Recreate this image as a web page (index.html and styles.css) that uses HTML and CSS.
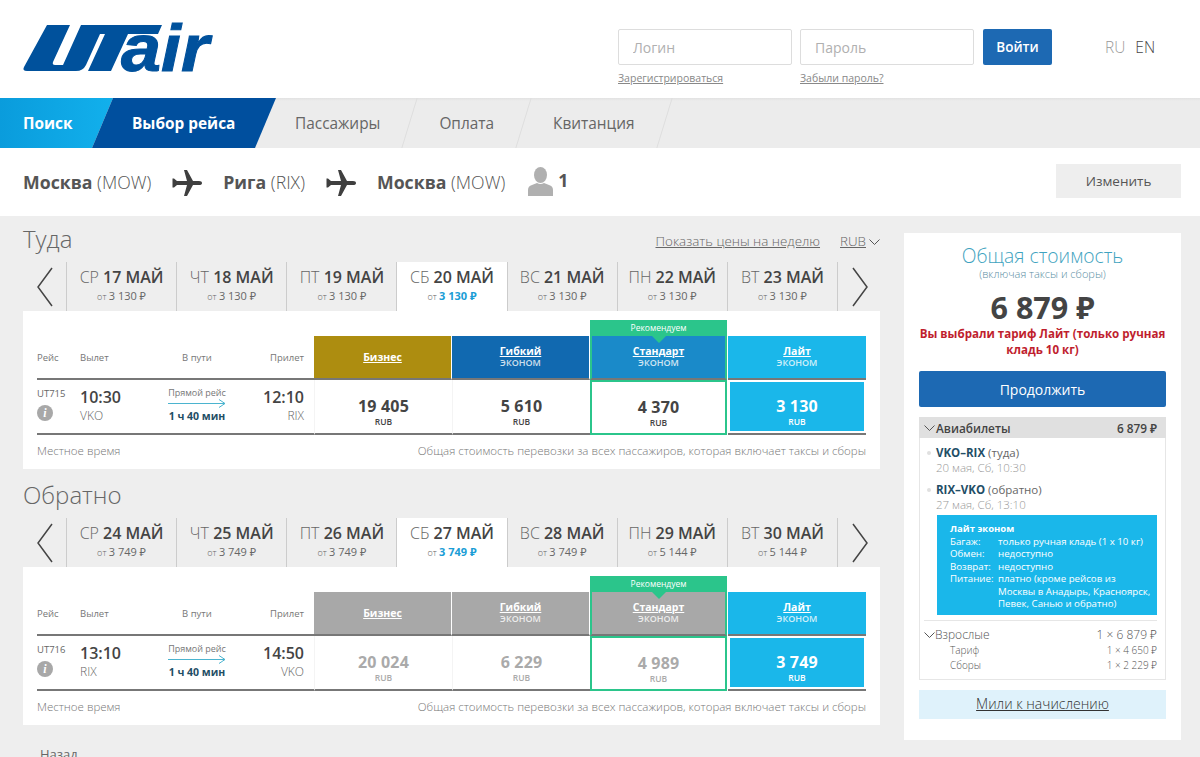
FILE: index.html
```html
<!doctype html>
<html>
  <head>
    <title>UTair - Выбор рейса</title>
    <link rel="stylesheet" href="styles.css">
  </head>
  <body>
    <header class="top">
      <svg class="logo" viewBox="23 23 192 49" width="192" height="49" role="img" aria-label="UTair">
        <path d="M47 25H70L53 62Q52 65 55 65H63L81 25H162L158 34H128L111 71H88L105 34H100L86 65Q83 71 76 71H27Q22 71 24 67Z"/>
        <text x="121" y="71" textLength="88" lengthAdjust="spacingAndGlyphs">air</text>
      </svg>
      <form class="login">
        <div class="field">
          <input type="text" placeholder="Логин">
          <a href="#">Зарегистрироваться</a>
        </div>
        <div class="field">
          <input type="text" placeholder="Пароль">
          <a href="#">Забыли пароль?</a>
        </div>
        <button type="button" class="btn-login">Войти</button>
      </form>
      <div class="langs"><span class="lang-off">RU</span><span>EN</span></div>
    </header>

    <nav class="steps">
      <a class="step step-done">Поиск</a>
      <a class="step step-current">Выбор рейса</a>
      <a class="step">Пассажиры</a>
      <a class="step">Оплата</a>
      <a class="step">Квитанция</a>
    </nav>

    <div class="route">
      <span class="city"><b>Москва</b> (MOW)</span>
      <svg class="plane" viewBox="0 0 30 26" width="30" height="26"><path d="M12 0h3l6 11h6q3 0 3 2t-3 2h-6l-6 11h-3l3-11H5l-3 2.500H0.500v-9H2L5 11h10z"/></svg>
      <span class="city"><b>Рига</b> (RIX)</span>
      <svg class="plane" viewBox="0 0 30 26" width="30" height="26"><path d="M12 0h3l6 11h6q3 0 3 2t-3 2h-6l-6 11h-3l3-11H5l-3 2.500H0.500v-9H2L5 11h10z"/></svg>
      <span class="city"><b>Москва</b> (MOW)</span>
      <svg class="person" viewBox="0 0 25 29" width="25" height="29"><ellipse cx="12.500" cy="8" rx="6.500" ry="8"/><path d="M0 29v-6q0-4 4-5l5-2q3.500 2 7 0l5 2q4 1 4 5v6z"/></svg>
      <b class="count">1</b>
      <button type="button" class="btn-change">Изменить</button>
    </div>

    <main class="content">
      <div class="flights">
        <section class="direction">
          <div class="direction-head">
            <h2>Туда</h2>
            <a class="week-link" href="#">Показать цены на неделю</a>
            <a class="currency" href="#">RUB</a>
            <svg class="chev" viewBox="0 0 11 6" width="11" height="6"><path d="M0.500 0.500l5 5 5-5"/></svg>
          </div>
          <div class="dates">
            <a class="date-arrow"><svg viewBox="0 0 16 40" width="16" height="40"><path d="M15 1L1 20l14 19"/></svg></a>
            <a class="date"><p><span>СР</span> <b>17 МАЙ</b></p><small>от <i>3 130 ₽</i></small></a>
            <a class="date"><p><span>ЧТ</span> <b>18 МАЙ</b></p><small>от <i>3 130 ₽</i></small></a>
            <a class="date"><p><span>ПТ</span> <b>19 МАЙ</b></p><small>от <i>3 130 ₽</i></small></a>
            <a class="date date-active"><p><span>СБ</span> <b>20 МАЙ</b></p><small>от <i>3 130 ₽</i></small></a>
            <a class="date"><p><span>ВС</span> <b>21 МАЙ</b></p><small>от <i>3 130 ₽</i></small></a>
            <a class="date"><p><span>ПН</span> <b>22 МАЙ</b></p><small>от <i>3 130 ₽</i></small></a>
            <a class="date"><p><span>ВТ</span> <b>23 МАЙ</b></p><small>от <i>3 130 ₽</i></small></a>
            <a class="date-arrow date-next"><svg viewBox="0 0 16 40" width="16" height="40"><path d="M1 1l14 19L1 39"/></svg></a>
          </div>
          <div class="panel">
            <div class="fares">
              <div class="labels">
                <span>Рейс</span><span>Вылет</span><span class="center">В пути</span><span class="right">Прилет</span>
              </div>
              <a class="fare-head fare-business"><u>Бизнес</u></a>
              <a class="fare-head fare-flex"><u>Гибкий</u><em>эконом</em></a>
              <a class="fare-head fare-standard fare-rec"><span class="rec-tag">Рекомендуем</span><u>Стандарт</u><em>эконом</em></a>
              <a class="fare-head fare-lite"><u>Лайт</u><em>эконом</em></a>

              <div class="flight">
                <div class="flight-no">UT715<span class="info">i</span></div>
                <div class="time"><b>10:30</b><span>VKO</span></div>
                <div class="way">
                  <span>Прямой рейс</span>
                  <svg viewBox="0 0 58 9" width="58" height="9"><path d="M0 4.500h57M51 0.500l6 4-6 4"/></svg>
                  <b>1 ч 40 мин</b>
                </div>
                <div class="time right"><b>12:10</b><span>RIX</span></div>
              </div>
              <a class="price"><b>19 405</b><span>RUB</span></a>
              <a class="price"><b>5 610</b><span>RUB</span></a>
              <a class="price price-rec"><b>4 370</b><span>RUB</span></a>
              <div class="price-slot"><a class="price price-selected"><b>3 130</b><span>RUB</span></a></div>
            </div>
            <div class="panel-foot">
              <span>Местное время</span>
              <span>Общая стоимость перевозки за всех пассажиров, которая включает таксы и сборы</span>
            </div>
          </div>
        </section>

        <section class="direction">
          <div class="direction-head">
            <h2>Обратно</h2>
          </div>
          <div class="dates">
            <a class="date-arrow"><svg viewBox="0 0 16 40" width="16" height="40"><path d="M15 1L1 20l14 19"/></svg></a>
            <a class="date"><p><span>СР</span> <b>24 МАЙ</b></p><small>от <i>3 749 ₽</i></small></a>
            <a class="date"><p><span>ЧТ</span> <b>25 МАЙ</b></p><small>от <i>3 749 ₽</i></small></a>
            <a class="date"><p><span>ПТ</span> <b>26 МАЙ</b></p><small>от <i>3 749 ₽</i></small></a>
            <a class="date date-active"><p><span>СБ</span> <b>27 МАЙ</b></p><small>от <i>3 749 ₽</i></small></a>
            <a class="date"><p><span>ВС</span> <b>28 МАЙ</b></p><small>от <i>3 749 ₽</i></small></a>
            <a class="date"><p><span>ПН</span> <b>29 МАЙ</b></p><small>от <i>5 144 ₽</i></small></a>
            <a class="date"><p><span>ВТ</span> <b>30 МАЙ</b></p><small>от <i>5 144 ₽</i></small></a>
            <a class="date-arrow date-next"><svg viewBox="0 0 16 40" width="16" height="40"><path d="M1 1l14 19L1 39"/></svg></a>
          </div>
          <div class="panel">
            <div class="fares fares-muted">
              <div class="labels">
                <span>Рейс</span><span>Вылет</span><span class="center">В пути</span><span class="right">Прилет</span>
              </div>
              <a class="fare-head fare-business"><u>Бизнес</u></a>
              <a class="fare-head fare-flex"><u>Гибкий</u><em>эконом</em></a>
              <a class="fare-head fare-standard fare-rec"><span class="rec-tag">Рекомендуем</span><u>Стандарт</u><em>эконом</em></a>
              <a class="fare-head fare-lite"><u>Лайт</u><em>эконом</em></a>

              <div class="flight">
                <div class="flight-no">UT716<span class="info">i</span></div>
                <div class="time"><b>13:10</b><span>RIX</span></div>
                <div class="way">
                  <span>Прямой рейс</span>
                  <svg viewBox="0 0 58 9" width="58" height="9"><path d="M0 4.500h57M51 0.500l6 4-6 4"/></svg>
                  <b>1 ч 40 мин</b>
                </div>
                <div class="time right"><b>14:50</b><span>VKO</span></div>
              </div>
              <a class="price"><b>20 024</b><span>RUB</span></a>
              <a class="price"><b>6 229</b><span>RUB</span></a>
              <a class="price price-rec"><b>4 989</b><span>RUB</span></a>
              <div class="price-slot"><a class="price price-selected"><b>3 749</b><span>RUB</span></a></div>
            </div>
            <div class="panel-foot">
              <span>Местное время</span>
              <span>Общая стоимость перевозки за всех пассажиров, которая включает таксы и сборы</span>
            </div>
          </div>
        </section>

        <a class="back" href="#">Назад</a>
      </div>

      <aside class="summary">
        <h3>Общая стоимость</h3>
        <p class="summary-sub">(включая таксы и сборы)</p>
        <p class="total">6 879 ₽</p>
        <p class="warning">Вы выбрали тариф Лайт (только ручная кладь 10 кг)</p>
        <button type="button" class="btn-continue">Продолжить</button>

        <div class="tickets">
          <div class="tickets-head">
            <svg class="chev" viewBox="0 0 11 6" width="11" height="6"><path d="M0.500 0.500l5 5 5-5"/></svg>
            <b>Авиабилеты</b>
            <b class="push">6 879 ₽</b>
          </div>
          <div class="tickets-body">
            <div class="leg">
              <p><b>VKO–RIX</b> (туда)</p>
              <span>20 мая, Сб, 10:30</span>
            </div>
            <div class="leg">
              <p><b>RIX–VKO</b> (обратно)</p>
              <span>27 мая, Сб, 13:10</span>
            </div>
            <dl class="tariff">
              <h4>Лайт эконом</h4>
              <dt>Багаж:</dt><dd>только ручная кладь (1 x 10 кг)</dd>
              <dt>Обмен:</dt><dd>недоступно</dd>
              <dt>Возврат:</dt><dd>недоступно</dd>
              <dt>Питание:</dt><dd>платно (кроме рейсов из<br>Москвы в Анадырь, Красноярск,<br>Певек, Санью и обратно)</dd>
            </dl>
            <div class="pax">
              <svg class="chev" viewBox="0 0 11 6" width="11" height="6"><path d="M0.500 0.500l5 5 5-5"/></svg>
              <span>Взрослые</span>
              <span class="push">1 × 6 879 ₽</span>
            </div>
            <div class="pax-sub"><span>Тариф</span><span>1 × 4 650 ₽</span></div>
            <div class="pax-sub"><span>Сборы</span><span>1 × 2 229 ₽</span></div>
          </div>
        </div>

        <a class="miles" href="#">Мили к начислению</a>
      </aside>
    </main>
  </body>
</html>
```

FILE: styles.css
```css
* {
  box-sizing: border-box;
}

html,
body {
  height: 757px;
  margin: 0;
  overflow: hidden;
}

body {
  font-family: "Open Sans", "Noto Sans", sans-serif;
  color: #444;
  background: #eee;
}

h2,
h3,
h4,
p,
dl,
dd {
  margin: 0;
  font-weight: normal;
}

a {
  color: inherit;
}

i,
em {
  font-style: normal;
}

/* header */

.top {
  display: flex;
  height: 98px;
  padding: 23px 44px 0 23px;
  background: #fff;
}

.logo {
  overflow: visible;
  fill: #00519c;
}

.logo text {
  font-family: "Liberation Sans", sans-serif;
  font-size: 66px;
  font-style: italic;
  font-weight: bold;
  stroke: #00519c;
  stroke-width: 1px;
}

.login {
  display: flex;
  gap: 8px;
  margin: 6px 0 0 auto;
}

.field {
  display: flex;
  flex-direction: column;
  width: 174px;
}

.field input {
  height: 36px;
  padding: 0 14px;
  font: 14px "Open Sans", sans-serif;
  border: 1px solid #ddd;
  border-radius: 2px;
}

.field input::placeholder {
  color: #b0b0b0;
}

.field a {
  margin-top: 6px;
  font-size: 10.500px;
  color: #888;
}

.btn-login {
  width: 69px;
  height: 36px;
  margin-left: 1px;
  font: 600 13.500px "Open Sans", sans-serif;
  color: #fff;
  background: #1d69b3;
  border: 0;
  border-radius: 2px;
}

.langs {
  display: flex;
  gap: 10px;
  width: 53px;
  margin: 13px -2px 0 53px;
  font-size: 15.500px;
  font-weight: 300;
  color: #444;
}

.lang-off {
  color: #999;
}

/* steps */

.steps {
  display: flex;
  height: 50px;
  overflow: hidden;
  background: linear-gradient(#e2e2e2 0, #ececec 3px);
}

.step {
  position: relative;
  padding: 0 30px 0 29px;
  font-size: 15.400px;
  line-height: 51px;
  color: #666;
}

.step::after {
  content: "";
  position: absolute;
  top: 0;
  right: 0;
  bottom: 0;
  border-right: 1px solid #dedede;
  transform: skewX(-17deg);
}

.step-done,
.step-current {
  font-weight: 700;
  color: #fff;
}

.step-done::after,
.step-current::after {
  display: none;
}

.step-done {
  width: 113px;
  padding: 0 0 0 23px;
  background: linear-gradient(90deg, #0a9cdc, #12b0ec);
  clip-path: polygon(0 0, 100% 0, 92px 100%, 0 100%);
}

.step-current {
  width: 184px;
  margin-left: -21px;
  padding: 0 0 0 40px;
  background: #004f9e;
  clip-path: polygon(21px 0, 100% 0, 163px 100%, 0 100%);
}

.step-current + .step {
  padding-left: 19px;
}

/* route */

.route {
  display: flex;
  align-items: center;
  height: 68px;
  padding: 0 19px 0 23px;
  font-size: 17.700px;
  font-weight: 300;
  color: #555;
  background: #fff;
}

.city b {
  font-weight: 700;
}

.plane {
  margin: 2px 21px 0;
  fill: #3f3f3f;
}

.person {
  margin: -2px 5px 0 23px;
  fill: #b0b0b0;
}

.count {
  margin-top: -4px;
  font-weight: 700;
}

.btn-change {
  width: 125px;
  height: 34px;
  margin: -2px 0 0 auto;
  font: 13.500px "Open Sans", sans-serif;
  color: #555;
  background: #eee;
  border: 0;
}

/* content */

.content {
  display: flex;
  align-items: flex-start;
  gap: 24px;
  padding: 17px 19px 0 23px;
}

.flights {
  flex: none;
  width: 857px;
}

.direction {
  margin-bottom: 20px;
}

.direction-head {
  display: flex;
  align-items: center;
  height: 29px;
  padding-bottom: 14px;
}

.direction-head h2 {
  margin: -4px auto 0 0;
  font-size: 24px;
  font-weight: 300;
  line-height: 1;
  color: #666;
}

.week-link,
.currency {
  font-size: 13.400px;
  font-weight: 300;
  color: #666;
}

.currency {
  margin-left: 20px;
}

.chev {
  flex: none;
  fill: none;
  stroke: #555;
}

.direction-head .chev {
  margin: 3px 0 0 3px;
}

.dates {
  display: flex;
  height: 49px;
}

.date-arrow {
  display: flex;
  flex: none;
  align-items: center;
  width: 43px;
  padding-left: 14px;
}

.date-arrow svg {
  fill: none;
  stroke: #444;
  stroke-width: 1.500px;
}

.date-next {
  border-left: 1px solid #ccc;
}

.date {
  flex: 1;
  padding-top: 4px;
  text-align: center;
  border-left: 1px solid #ccc;
}

.date p {
  font-size: 16px;
  line-height: 22px;
  white-space: nowrap;
}

.date p span {
  font-weight: 300;
  color: #666;
}

.date p b {
  font-weight: 600;
}

.date small {
  display: block;
  font-size: 9px;
  font-weight: 300;
  line-height: 15px;
  color: #666;
}

.date small i {
  font-size: 11px;
  font-weight: 400;
}

.date-active {
  background: #fff;
}

.date-active small i {
  font-weight: 700;
  color: #1a9dd6;
}

.panel {
  height: 158px;
  padding: 25px 14px 0;
  background: #fff;
}

.fares {
  display: grid;
  grid-template-columns: 277px 138px 138px 138px 138px;
  grid-template-rows: 44px 55px;
}

.labels {
  display: grid;
  grid-template-columns: 43px 88px 58px 78px;
  align-items: center;
  padding-top: 1px;
  font-size: 9.500px;
  color: #777;
  border-bottom: 2px solid #777;
}

.center {
  text-align: center;
}

.right {
  text-align: right;
}

.fare-head {
  position: relative;
  display: flex;
  flex-direction: column;
  align-items: center;
  justify-content: center;
  font-size: 10.500px;
  line-height: 12px;
  color: #fff;
  border-right: 1px solid #fff;
  border-bottom: 2px solid #777;
}

.fare-head u {
  font-weight: 700;
}

.fare-head em {
  font-size: 9px;
  font-weight: 600;
  text-transform: uppercase;
  color: rgba(255, 255, 255, 0.8);
}

.fare-business {
  background: #ad8d10;
}

.fare-flex {
  background: #1169b0;
}

.fare-standard {
  background: #1a8ac9;
}

.fare-lite {
  background: #1ab7ea;
  border-right: 0;
}

.fare-rec {
  margin-right: 1px;
  border-right: 2px solid #2bc58b;
  border-left: 2px solid #2bc58b;
}

.fares-muted .fare-business,
.fares-muted .fare-flex,
.fares-muted .fare-standard {
  background: #a8a8a8;
}

.rec-tag {
  position: absolute;
  top: -16px;
  right: -2px;
  left: -2px;
  height: 16px;
  font-size: 8.500px;
  line-height: 16px;
  text-align: center;
  background: #2bc58b;
}

.rec-tag::after {
  content: "";
  position: absolute;
  bottom: -7px;
  left: 50%;
  margin-left: -7px;
  border-top: 7px solid #2bc58b;
  border-right: 7px solid transparent;
  border-left: 7px solid transparent;
}

.flight {
  display: grid;
  grid-template-columns: 43px 88px 58px 78px;
  padding-top: 7px;
  border-bottom: 2px solid #777;
}

.flight-no {
  display: flex;
  flex-direction: column;
  gap: 6px;
  padding-top: 1px;
  font-size: 9.500px;
  line-height: 11px;
  color: #666;
}

.info {
  width: 16px;
  height: 16px;
  font: italic bold 12px/16px "Liberation Serif", serif;
  text-align: center;
  color: #fff;
  background: #a8a8a8;
  border-radius: 50%;
}

.time {
  display: flex;
  flex-direction: column;
  gap: 1px;
  font-size: 12px;
  line-height: 16px;
  font-weight: 300;
  color: #666;
}

.time b {
  font-size: 16px;
  font-weight: 600;
  line-height: 20px;
  color: #444;
}

.way {
  display: flex;
  flex-direction: column;
  align-items: center;
  font-size: 9px;
  line-height: 12px;
  color: #777;
  white-space: nowrap;
}

.way svg {
  flex: none;
  margin: 0 0 1px;
  fill: none;
  stroke: #4bb4cf;
}

.way b {
  font-size: 10.500px;
  font-weight: 700;
  line-height: 14px;
  color: #1f4e66;
}

.price {
  display: flex;
  flex-direction: column;
  align-items: center;
  justify-content: center;
  padding-top: 11px;
  font-size: 8.500px;
  font-weight: 600;
  line-height: 12px;
  border-left: 1px solid #f4f4f4;
  border-bottom: 2px solid #777;
}

.price b {
  font-size: 16px;
  font-weight: 700;
  line-height: 20px;
  letter-spacing: 0.200px;
}

.price-rec {
  margin-right: 1px;
  border: 2px solid #2bc58b;
}

.price-slot {
  padding: 2px;
  border-bottom: 2px solid #777;
}

.price-selected {
  height: 100%;
  padding-top: 11px;
  color: #fff;
  background: #1ab7ea;
  border: 0;
}

.fares-muted .price {
  color: #aaa;
}

.fares-muted .price-selected {
  color: #fff;
}

.panel-foot {
  display: flex;
  justify-content: space-between;
  margin-top: 8px;
  font-size: 11.500px;
  font-weight: 300;
  color: #777;
}

.back {
  display: block;
  margin: 6px 0 0 17px;
  font-size: 13px;
  color: #666;
}

/* summary */

.summary {
  flex: none;
  width: 277px;
  height: 507px;
  padding: 11px 15px 0;
  text-align: center;
  background: #fff;
}

.summary h3 {
  font-size: 19.300px;
  font-weight: 300;
  line-height: 24px;
  color: #3fa3c0;
}

.summary-sub {
  font-size: 11px;
  font-weight: 300;
  line-height: 12px;
  color: #5a8ea3;
}

.total {
  margin-top: 10px;
  font-size: 30.500px;
  font-weight: 700;
  line-height: 34px;
}

.warning {
  margin-top: 2px;
  font-size: 11.600px;
  font-weight: 700;
  line-height: 16px;
  color: #bf1e2e;
}

.btn-continue {
  width: 100%;
  height: 36px;
  margin-top: 13px;
  font: 14px "Open Sans", sans-serif;
  color: #fff;
  background: #1d69b3;
  border: 0;
  border-radius: 2px;
}

.tickets {
  height: 263px;
  margin-top: 10px;
  text-align: left;
  border: 1px solid #e6e6e6;
}

.tickets-head {
  display: flex;
  align-items: center;
  gap: 1px;
  height: 21px;
  margin: -1px -1px 0;
  padding: 0 9px 0 5px;
  font-size: 11.800px;
  background: #e0e0e0;
}

.tickets-head b {
  font-weight: 600;
}

.push {
  margin-left: auto;
}

.tickets-body {
  padding: 0 8px 0 4px;
}

.leg {
  position: relative;
  padding-left: 12px;
  margin-top: 7px;
  font-size: 11.500px;
  line-height: 15px;
  font-weight: 300;
  color: #999;
}

.leg::before {
  content: "";
  position: absolute;
  top: 6px;
  left: 3px;
  width: 4px;
  height: 4px;
  background: #e0e0e0;
  border-radius: 50%;
}

.leg p {
  font-weight: 400;
  color: #666;
}

.leg b {
  font-weight: 700;
  color: #1f4e66;
}

.tariff {
  display: grid;
  grid-template-columns: 48px 1fr;
  align-content: start;
  width: 220px;
  height: 100px;
  margin: 3px 0 0 13px;
  padding: 8px 3px 0 13px;
  font-size: 9.700px;
  line-height: 12.500px;
  color: #fff;
  background: #1ab7ea;
}

.tariff h4 {
  grid-column: 1 / 3;
  font-size: 9.500px;
  font-weight: 700;
}

.pax {
  display: flex;
  align-items: center;
  margin-top: 5px;
  padding-top: 5px;
  font-size: 12px;
  font-weight: 300;
  line-height: 17px;
  color: #555;
  border-top: 1px solid #e6e6e6;
}

.pax-sub {
  display: flex;
  justify-content: space-between;
  padding-left: 26px;
  font-size: 10px;
  font-weight: 300;
  line-height: 15px;
  color: #555;
}

.miles {
  display: block;
  height: 29px;
  margin-top: 10px;
  font-size: 14px;
  font-weight: 300;
  line-height: 28px;
  color: #333;
  background: #dff2fb;
}
```
